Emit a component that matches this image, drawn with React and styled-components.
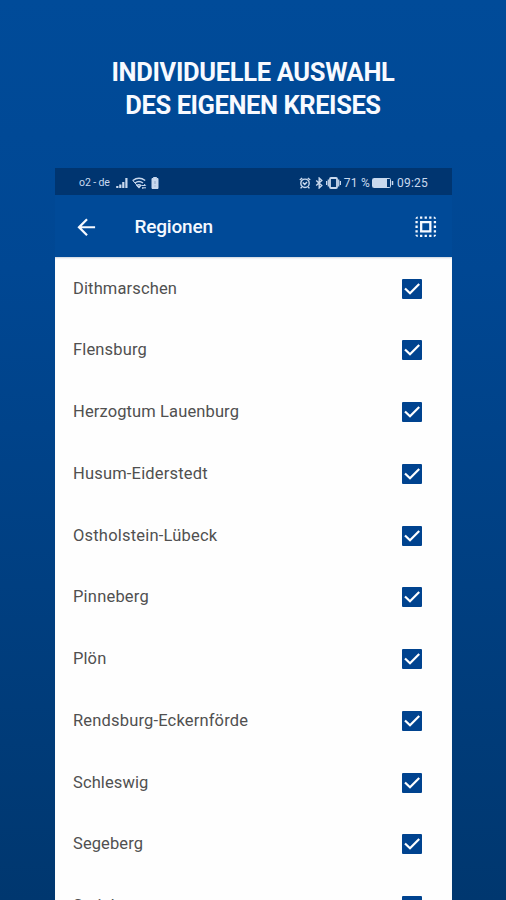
import React from "react";
import styled, { createGlobalStyle } from "styled-components";
import { MdArrowBack, MdSelectAll } from "react-icons/md";

const GlobalStyle = createGlobalStyle`
  * {
    box-sizing: border-box;
  }

  body {
    margin: 0;
    font-family: Roboto, "Noto Sans", sans-serif;
  }
`;

const Page = styled.div`
  display: flex;
  flex-direction: column;
  width: 506px;
  height: 900px;
  overflow: hidden;
  background: linear-gradient(180deg, #004b99 0%, #004793 30%, #00376f 100%);
`;

const Headline = styled.h1`
  display: flex;
  flex-direction: column;
  align-items: center;
  height: 168px;
  flex-shrink: 0;
  margin: 0;
  padding-top: 56px;
  color: #f8faff;
  font-size: 25.5px;
  font-weight: 700;
  line-height: 33px;
  white-space: nowrap;
`;

const HeadlineLine = styled.span`
  letter-spacing: ${props => props.spacing}px;
`;

const Phone = styled.main`
  display: flex;
  flex-direction: column;
  flex: 1;
  width: 397px;
  min-height: 0;
  margin-left: 55px;
  overflow: hidden;
  background: #fefefe;
`;

const StatusBar = styled.div`
  display: flex;
  align-items: center;
  justify-content: space-between;
  height: 27px;
  flex-shrink: 0;
  padding: 2px 24px 0 24px;
  background: #003570;
  color: #c9d9ee;
  font-size: 11px;
`;

const StatusGroup = styled.div`
  display: flex;
  align-items: center;

  svg {
    display: block;
    flex-shrink: 0;
  }
`;

const StatusText = styled.span`
  margin-left: ${props => props.left || 0}px;
  font-size: ${props => props.size || 11}px;
  letter-spacing: ${props => props.spacing || 0}px;
  white-space: nowrap;
`;

const StatusIcon = styled.svg`
  margin-left: ${props => props.$left || 0}px;
  fill: none;
  stroke: currentColor;
`;

const AppBar = styled.header`
  display: flex;
  align-items: center;
  height: 62px;
  flex-shrink: 0;
  padding: 2px 13px 0 18px;
  background: #004a98;
  color: #f5f9ff;
`;

const AppTitle = styled.h2`
  flex: 1;
  margin: 0 0 1px 35px;
  font-size: 19px;
  font-weight: 500;
  letter-spacing: ${props => props.spacing}px;
`;

const List = styled.ul`
  flex: 1;
  min-height: 0;
  margin: 0;
  padding: 0.7px 0 0;
  overflow: hidden;
  box-shadow: inset 0 2px 2px -1px #c9d2de;
  list-style: none;
`;

const Row = styled.li`
  display: flex;
  align-items: center;
  justify-content: space-between;
  height: 61.75px;
  padding: 0 29.7px 0 18px;
`;

const RegionName = styled.span`
  padding-bottom: 0.8px;
  color: #505050;
  font-size: 16.5px;
  letter-spacing: ${props => props.spacing}px;
`;

const Checkbox = styled.span`
  display: flex;
  width: 20px;
  height: 20px;
  border-radius: 1px;
  background: #00438f;

  svg {
    fill: none;
    stroke: #fff;
    stroke-width: 2.2;
  }
`;

const regions = [
  { name: "Dithmarschen", spacing: 0.13 },
  { name: "Flensburg", spacing: 0.15 },
  { name: "Herzogtum Lauenburg", spacing: 0.12 },
  { name: "Husum-Eiderstedt", spacing: 0.18 },
  { name: "Ostholstein-Lübeck", spacing: 0.2 },
  { name: "Pinneberg", spacing: 0.2 },
  { name: "Plön", spacing: 0.1 },
  { name: "Rendsburg-Eckernförde", spacing: 0.17 },
  { name: "Schleswig", spacing: 0.1 },
  { name: "Segeberg", spacing: 0.1 },
  { name: "Steinburg", spacing: 0.15 }
];

const SignalIcon = () => (
  <StatusIcon width="12" height="12" $left={6.5} strokeWidth="2.2">
    <path d="M1.3 9v2M4.3 7.5v3.5M7.3 5v6" />
    <path d="M10.4 1v10" />
  </StatusIcon>
);

const WifiIcon = () => (
  <StatusIcon width="15" height="12" $left={4} strokeWidth="1.4">
    <path d="M0.8 3.5Q7 -1 13.2 3.5M3 6Q7 3 11 6M5 8.3Q7 7 8.8 8.3L7 10.5z" />
    <path d="M0.8 3.5L7 10.5M9.5 8.5h4M12.2 7l1.5 1.5M14 10.8h-4M11.5 12l-1.5-1.3" strokeWidth="1" />
  </StatusIcon>
);

const SmallBatteryIcon = () => (
  <StatusIcon width="8" height="12" $left={3.5}>
    <path d="M2.5 0.5h3v1h1.5v10h-6v-10h1.5z" fill="currentColor" />
    <path d="M4 4v3M4 8.5v1" stroke="#8fa6c6" />
  </StatusIcon>
);

const AlarmIcon = () => (
  <StatusIcon width="12" height="12" strokeWidth="1.4">
    <circle cx="6" cy="6.3" r="4.2" />
    <path d="M0.8 3L3.2 1M11.2 3L8.8 1M3.8 5.5L5.7 7.5L8 5M2.8 10l-1.2 1.4M9.2 10l1.2 1.4" />
  </StatusIcon>
);

const BluetoothIcon = () => (
  <StatusIcon width="9" height="12" $left={3.5} strokeWidth="1.4">
    <path d="M1.2 3.4L6.8 8.4L4.2 10.9V1.1L6.8 3.6L1.2 8.6" />
  </StatusIcon>
);

const VibrateIcon = () => (
  <StatusIcon width="15" height="12" $left={2.5} strokeWidth="1.2">
    <rect x="4" y="1" width="7" height="10" rx="1" strokeWidth="1.8" />
    <path d="M2.3 2.5v7M0.6 4v4M12.7 2.5v7M14.4 4v4" />
  </StatusIcon>
);

const BatteryIcon = () => (
  <StatusIcon width="22" height="10" $left={2}>
    <rect x="0.5" y="0.5" width="18" height="9" rx="1" />
    <rect x="1" y="1" width="14" height="8" fill="currentColor" stroke="none" />
    <path d="M20.5 3v4" strokeWidth="1.5" />
  </StatusIcon>
);

const RegionRow = ({ region }) => (
  <Row>
    <RegionName spacing={region.spacing}>{region.name}</RegionName>
    <Checkbox role="checkbox" aria-checked="true" aria-label={region.name}>
      <svg width="20" height="20">
        <path d="M3 9.5L8 14.3L17.2 5" />
      </svg>
    </Checkbox>
  </Row>
);

const App = () => (
  <React.Fragment>
    <GlobalStyle />
    <Page>
      <Headline>
        <HeadlineLine spacing={-0.33}>INDIVIDUELLE AUSWAHL</HeadlineLine>
        <HeadlineLine spacing={-0.42}>DES EIGENEN KREISES</HeadlineLine>
      </Headline>
      <Phone>
        <StatusBar>
          <StatusGroup>
            <StatusText size={10.5} spacing={-0.1}>
              o2 - de
            </StatusText>
            <SignalIcon />
            <WifiIcon />
            <SmallBatteryIcon />
          </StatusGroup>
          <StatusGroup>
            <AlarmIcon />
            <BluetoothIcon />
            <VibrateIcon />
            <StatusText left={2.5} size={12} spacing={0.3}>
              71 %
            </StatusText>
            <BatteryIcon />
            <StatusText left={3} size={12} spacing={0.2}>
              09:25
            </StatusText>
          </StatusGroup>
        </StatusBar>
        <AppBar>
          <MdArrowBack size={26.5} />
          <AppTitle spacing={-0.2}>Regionen</AppTitle>
          <MdSelectAll size={27.5} />
        </AppBar>
        <List>
          {regions.map(region => (
            <RegionRow key={region.name} region={region} />
          ))}
        </List>
      </Phone>
    </Page>
  </React.Fragment>
);

export default App;
